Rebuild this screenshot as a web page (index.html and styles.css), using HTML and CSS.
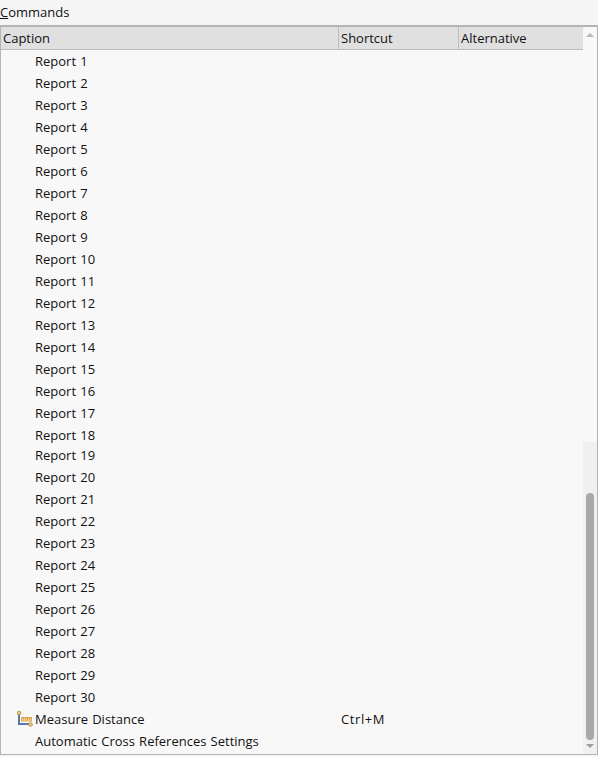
FILE: index.html
```html
<!DOCTYPE html>
<html>
<head>
  <meta charset="UTF-8">
  <meta name="viewport" content="width=device-width, initial-scale=1.0">
  <title>Commands</title>
  <link rel="stylesheet" href="styles.css">
</head>
<body>
  <div class="label"><u>C</u>ommands</div>

  <div class="frame">
    <div class="table">
      <div class="head">
        <div class="col-caption">Caption</div>
        <div class="col-shortcut">Shortcut</div>
        <div class="col-alt">Alternative</div>
      </div>
      <div class="row"><span class="caption">Report 1</span></div>
      <div class="row"><span class="caption">Report 2</span></div>
      <div class="row"><span class="caption">Report 3</span></div>
      <div class="row"><span class="caption">Report 4</span></div>
      <div class="row"><span class="caption">Report 5</span></div>
      <div class="row"><span class="caption">Report 6</span></div>
      <div class="row"><span class="caption">Report 7</span></div>
      <div class="row"><span class="caption">Report 8</span></div>
      <div class="row"><span class="caption">Report 9</span></div>
      <div class="row"><span class="caption">Report 10</span></div>
      <div class="row"><span class="caption">Report 11</span></div>
      <div class="row"><span class="caption">Report 12</span></div>
      <div class="row"><span class="caption">Report 13</span></div>
      <div class="row"><span class="caption">Report 14</span></div>
      <div class="row"><span class="caption">Report 15</span></div>
      <div class="row"><span class="caption">Report 16</span></div>
      <div class="row"><span class="caption">Report 17</span></div>
      <div class="row"><span class="caption">Report 18</span></div>
      <div class="row seam"><span class="caption">Report 19</span></div>
      <div class="row"><span class="caption">Report 20</span></div>
      <div class="row"><span class="caption">Report 21</span></div>
      <div class="row"><span class="caption">Report 22</span></div>
      <div class="row"><span class="caption">Report 23</span></div>
      <div class="row"><span class="caption">Report 24</span></div>
      <div class="row"><span class="caption">Report 25</span></div>
      <div class="row"><span class="caption">Report 26</span></div>
      <div class="row"><span class="caption">Report 27</span></div>
      <div class="row"><span class="caption">Report 28</span></div>
      <div class="row"><span class="caption">Report 29</span></div>
      <div class="row"><span class="caption">Report 30</span></div>
      <div class="row">
        <svg class="icon" width="16" height="16" viewBox="0 0 16 16">
          <path d="M2 2V13H13" fill="none" stroke="#5a78b0" stroke-width="2"/>
          <rect x="4.5" y="6.5" width="10" height="3.5" fill="#f6d38a" stroke="#e0aa50" stroke-width="1"/>
          <path d="M6.5 6.5v2M8.5 6.5v2M10.5 6.5v2M12.5 6.5v2" stroke="#c8953c" stroke-width="1"/>
          <circle cx="2" cy="2" r="1.8" fill="#f0d090" stroke="#b89040" stroke-width="1"/>
          <circle cx="13.5" cy="13.5" r="1.8" fill="#f0d090" stroke="#b89040" stroke-width="1"/>
        </svg>
        <span class="caption">Measure Distance</span>
        <span class="shortcut">Ctrl+M</span>
      </div>
      <div class="row"><span class="caption">Automatic Cross References Settings</span></div>
    </div>

    <div class="scrollbar">
      <div class="arrow-up"></div>
      <div class="track">
        <div class="thumb"></div>
        <div class="arrow-down"></div>
      </div>
    </div>
  </div>
</body>
</html>
```

FILE: styles.css
```css
* {
  padding: 0;
  margin: 0;
  box-sizing: border-box;
}
body {
  height: 757px;
  overflow: hidden;
  font-family: "Open Sans", "Noto Sans", sans-serif;
  font-size: 13px;
  word-spacing: 0.8px;
  color: #111;
  background: #f5f5f5;
}
.label {
  height: 25px;
  padding-top: 3px;
  line-height: 19px;
}
.frame {
  display: flex;
  height: 730px;
  border: 1px solid #b4b4b4;
  border-top-width: 2px;
  background: #f8f8f8;
  overflow: hidden;
}
.table {
  width: 582px;
}
.head {
  display: flex;
  height: 23px;
  line-height: 22px;
  background: #e0e0e0;
  border-bottom: 1px solid #bdbdbd;
}
.col-caption {
  width: 337px;
  padding-left: 2px;
}
.col-shortcut {
  width: 120px;
  padding-left: 2px;
  border-left: 1px solid #bdbdbd;
}
.col-alt {
  padding-left: 2px;
  border-left: 1px solid #bdbdbd;
}
.row {
  position: relative;
  display: flex;
  height: 22px;
  line-height: 22px;
}
.seam {
  margin-top: -2px;
}
.caption {
  width: 340px;
  padding-left: 34px;
}
.shortcut {
  letter-spacing: 0.6px;
}
.icon {
  position: absolute;
  left: 16px;
  top: 3px;
}
.scrollbar {
  display: flex;
  flex-direction: column;
  width: 14px;
}
.arrow-up {
  width: 0;
  height: 0;
  margin: 6px 0 0 3px;
  border-left: 4px solid transparent;
  border-right: 4px solid transparent;
  border-bottom: 4px solid #b8b8b8;
}
.track {
  display: flex;
  flex-direction: column;
  align-items: center;
  height: 312px;
  margin-top: 405px;
  background: #f0f0f0;
}
.thumb {
  width: 8px;
  height: 247px;
  margin-top: 51px;
  border-radius: 4px;
  background: #a8a8a8;
}
.arrow-down {
  width: 0;
  height: 0;
  margin-top: 4px;
  border-left: 4px solid transparent;
  border-right: 4px solid transparent;
  border-top: 4px solid #9c9c9c;
}
```
